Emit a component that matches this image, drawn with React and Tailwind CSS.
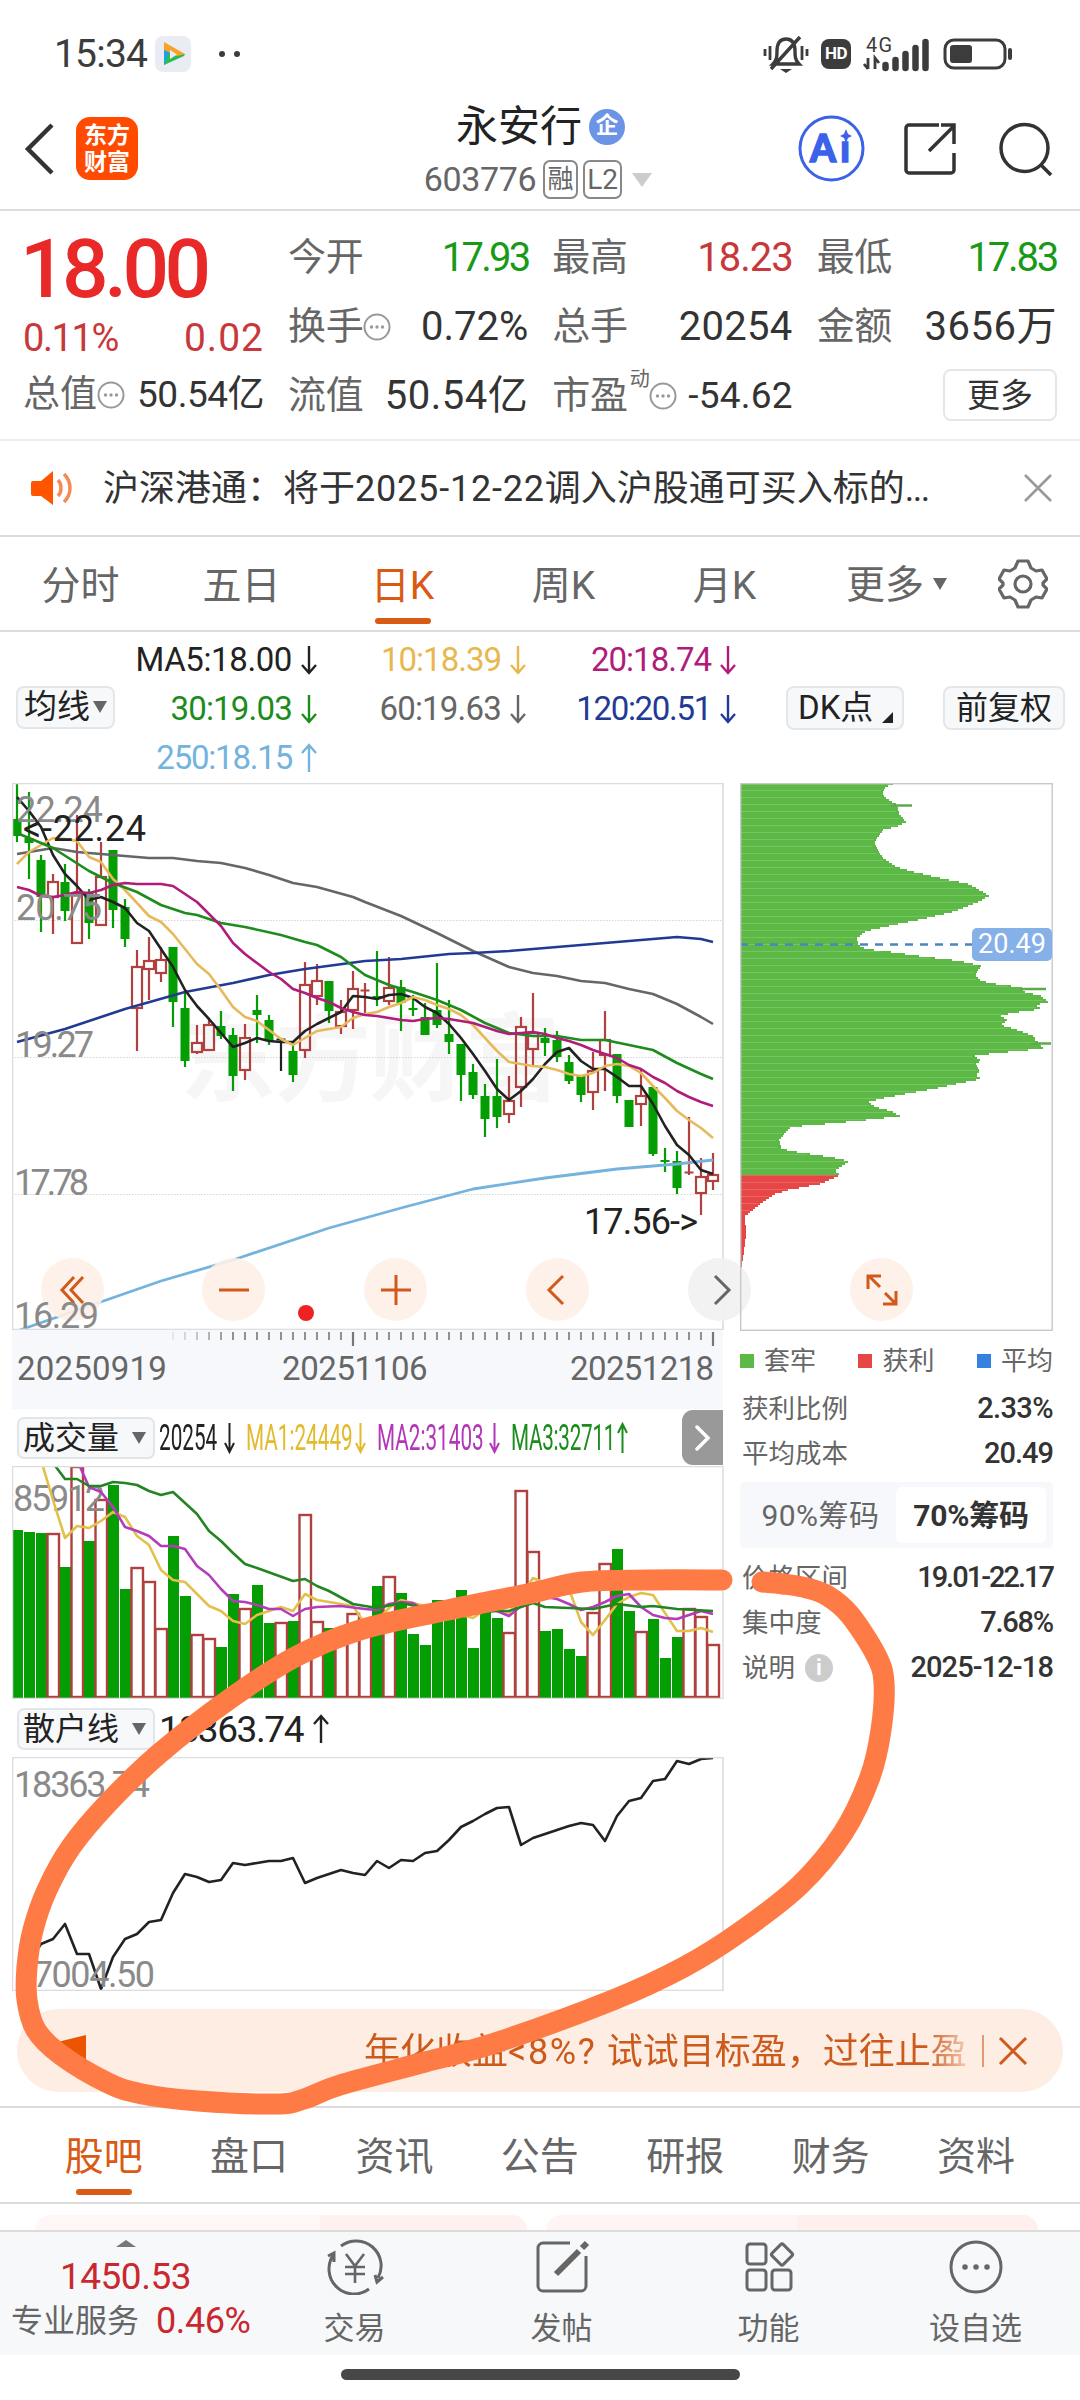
import { useState } from "react";
import clsx from "clsx";

const UP = "#b0413e";
const DOWN = "#049d04";

// [type, high, bodyTop, bodyBottom, low]   r = up, g = down, k = flat
const CANDLES = [
    ["g", 0, 36, 53, 59], ["g", 9, 55, 60, 96], ["g", 72, 77, 114, 149], ["r", 91, 98, 114, 151],
    ["g", 81, 99, 128, 138], ["r", 32, 109, 160, 160], ["g", 106, 109, 140, 156], ["r", 59, 93, 142, 142],
    ["g", 67, 67, 127, 145], ["g", 116, 124, 156, 164], ["r", 167, 183, 225, 268], ["r", 154, 177, 186, 217],
    ["r", 164, 176, 190, 199], ["g", 164, 164, 219, 244], ["g", 209, 225, 278, 284], ["r", 242, 259, 269, 271],
    ["r", 235, 241, 267, 267], ["g", 228, 243, 253, 256], ["g", 245, 252, 293, 308], ["r", 241, 254, 287, 297],
    ["g", 212, 227, 232, 260], ["g", 232, 237, 257, 262], ["k", 256, 256, 257, 288], ["g", 260, 268, 292, 299],
    ["r", 179, 201, 267, 275], ["r", 181, 197, 213, 222], ["g", 198, 198, 228, 240], ["r", 217, 228, 243, 251],
    ["r", 188, 205, 227, 246], ["r", 200, 207, 208, 230], ["g", 168, 213, 215, 223], ["r", 174, 204, 218, 222],
    ["g", 197, 204, 220, 248], ["g", 212, 225, 227, 233], ["g", 220, 234, 252, 252], ["g", 180, 227, 242, 245],
    ["g", 217, 251, 259, 271], ["g", 261, 261, 292, 318], ["g", 281, 289, 312, 316], ["g", 301, 313, 336, 354],
    ["g", 276, 313, 334, 345], ["r", 293, 317, 331, 340], ["r", 234, 243, 304, 324], ["r", 210, 249, 266, 283],
    ["g", 245, 255, 260, 273], ["g", 248, 257, 274, 279], ["g", 272, 279, 298, 301], ["g", 292, 292, 312, 319],
    ["r", 269, 287, 309, 327], ["r", 228, 256, 272, 308], ["g", 271, 271, 313, 320], ["g", 317, 317, 344, 344],
    ["r", 286, 312, 321, 343], ["g", 304, 304, 371, 373], ["g", 365, 377, 379, 389], ["g", 368, 378, 405, 411],
    ["r", 334, 389, 390, 392], ["r", 375, 393, 410, 432], ["r", 370, 391, 398, 407],
];

const MA5 = [14, 28, 44, 72, 91, 103, 117, 114, 119, 125, 140, 148, 166, 184, 207, 223, 236, 250, 264, 260, 255, 258, 259, 259, 248, 241, 235, 229, 213, 214, 216, 212, 211, 215, 224, 230, 241, 255, 271, 288, 306, 317, 308, 296, 281, 269, 265, 278, 286, 286, 294, 303, 303, 321, 343, 362, 372, 387, 391];
const MA10 = [81, 69, 62, 55, 56, 58, 74, 79, 96, 107, 120, 133, 139, 151, 166, 181, 191, 207, 224, 234, 238, 247, 256, 262, 255, 248, 246, 244, 235, 231, 229, 224, 220, 214, 217, 222, 226, 232, 242, 255, 268, 279, 281, 283, 284, 287, 291, 293, 290, 283, 281, 283, 290, 303, 315, 328, 337, 345, 355];
const MA20 = [104, 107, 113, 114, 112, 109, 110, 107, 102, 100, 101, 101, 101, 103, 111, 119, 131, 143, 160, 171, 180, 189, 196, 206, 210, 215, 219, 225, 229, 232, 233, 235, 237, 238, 236, 235, 236, 238, 240, 244, 248, 251, 250, 249, 251, 255, 258, 262, 267, 271, 275, 282, 286, 294, 300, 308, 314, 319, 323];
// the slower averages are stored sparsely as [index, y]
const MA30 = [[0, 50], [1, 55], [3, 65], [6, 88], [8, 100], [10, 109], [12, 122], [14, 130], [15, 132], [17, 140], [18, 142], [19, 144], [22, 152], [24, 159], [25, 162], [27, 174], [29, 192], [30, 197], [31, 202], [33, 209], [35, 217], [37, 227], [39, 240], [41, 250], [43, 253], [45, 253], [47, 257], [49, 257], [51, 262], [53, 267], [55, 280], [57, 291], [58, 296]];
const MA60 = [[0, 71], [3, 65], [5, 69], [8, 72], [11, 75], [13, 75], [15, 78], [17, 80], [19, 85], [21, 92], [23, 100], [25, 104], [28, 114], [29, 119], [32, 133], [35, 150], [38, 168], [41, 184], [43, 190], [45, 193], [47, 198], [49, 200], [51, 206], [53, 211], [55, 221], [57, 234], [58, 241]];
const MA120 = [[0, 259], [4, 246], [9, 226], [14, 209], [18, 200], [21, 192], [24, 186], [29, 178], [32, 176], [36, 171], [38, 170], [41, 168], [45, 164], [50, 159], [54, 155], [55, 154], [57, 156], [58, 159]];
const MA250 = [[0, 548], [12, 498], [18, 477], [26, 445], [32, 425], [38, 406], [44, 395], [50, 386], [55, 381], [58, 377]];

const VOLUME = [64, 66, 67, 67, 101, 0, 75, 33, 19, 123, 101, 115, 162, 70, 130, 168, 172, 181, 128, 142, 119, 157, 156, 155, 48, 155, 162, 165, 147, 168, 120, 110, 127, 168, 179, 134, 150, 124, 182, 144, 152, 166, 24, 85, 165, 163, 183, 190, 146, 97, 83, 145, 165, 153, 192, 171, 142, 150, 178];
const VMA1 = [[2, -6], [3, 34], [4, 72], [5, 60], [6, 62], [7, 55], [8, 46], [9, 51], [10, 70], [11, 79], [12, 104], [13, 114], [14, 116], [15, 128], [16, 140], [17, 145], [18, 155], [19, 158], [20, 149], [21, 145], [22, 141], [23, 145], [24, 128], [25, 134], [26, 136], [27, 138], [28, 140], [29, 158], [30, 155], [31, 142], [32, 134], [33, 137], [34, 140], [35, 142], [36, 144], [37, 149], [38, 152], [39, 144], [40, 142], [41, 147], [42, 131], [43, 112], [44, 117], [45, 116], [46, 123], [47, 156], [48, 169], [49, 154], [50, 138], [51, 131], [52, 127], [53, 129], [54, 147], [55, 165], [56, 165], [57, 162], [58, 166]];
const VMA2 = [[5, -6], [6, 21], [7, 26], [8, 41], [9, 61], [10, 65], [11, 70], [12, 80], [13, 80], [14, 83], [15, 100], [16, 109], [17, 123], [18, 135], [19, 136], [20, 139], [21, 143], [22, 143], [23, 150], [24, 143], [25, 141], [27, 140], [29, 143], [30, 144], [31, 138], [32, 136], [33, 137], [34, 144], [39, 142], [40, 145], [41, 150], [42, 140], [43, 131], [44, 131], [45, 133], [46, 138], [47, 144], [48, 141], [49, 136], [50, 130], [51, 128], [52, 141], [53, 149], [54, 152], [55, 153], [56, 149], [57, 145], [58, 148]];
const VMA3 = [[3, -3], [4, 13], [5, 13], [6, 20], [7, 20], [8, 16], [9, 17], [10, 19], [11, 25], [12, 29], [13, 26], [15, 48], [16, 65], [17, 75], [18, 87], [19, 98], [20, 102], [23, 115], [24, 113], [25, 120], [26, 125], [28, 138], [29, 140], [30, 142], [32, 137], [34, 142], [38, 147], [40, 145], [41, 145], [42, 141], [43, 137], [44, 141], [46, 142], [48, 143], [50, 138], [52, 141], [53, 140], [55, 143], [58, 145]];

const RETAIL = [232, 205, 187, 182, 167, 197, 197, 232, 200, 182, 177, 165, 163, 136, 117, 120, 125, 123, 106, 108, 106, 104, 104, 101, 126, 121, 117, 113, 116, 118, 104, 111, 103, 104, 96, 94, 83, 70, 64, 57, 51, 50, 88, 81, 77, 73, 69, 66, 68, 84, 59, 44, 41, 24, 22, 4, 7, 2, 1];

// outline of the cost distribution: [width, y]
const CHIPS = [
    [155, 0], [146, 4], [142, 10], [144, 14], [150, 18], [156, 21], [158, 25], [159, 31], [166, 39], [158, 43], [143, 47], [138, 54], [134, 60], [137, 66],
    [143, 75], [156, 84], [170, 88], [195, 94], [228, 101], [236, 105], [249, 113], [238, 119], [216, 128], [183, 136], [153, 142], [126, 148], [117, 155],
    [118, 162], [126, 166], [151, 169], [186, 174], [220, 178], [241, 183], [235, 192], [241, 198], [261, 202], [281, 204], [285, 209], [301, 213],
    [308, 219], [296, 222], [301, 226], [271, 230], [261, 233], [267, 237], [261, 242], [280, 248], [296, 254], [293, 256], [298, 259], [303, 265],
    [280, 268], [256, 270], [235, 273], [241, 278], [236, 281], [240, 288], [236, 292], [241, 296], [221, 300], [198, 305], [160, 312], [139, 316],
    [129, 319], [135, 324], [151, 328], [160, 333], [136, 336], [96, 340], [51, 344], [46, 349], [39, 357], [41, 365], [50, 368], [90, 374], [109, 378],
    [95, 388], [99, 391], [98, 393], [80, 401], [48, 407], [35, 411], [20, 421], [5, 433], [6, 451], [3, 475], [0, 492],
];

const MARK = [
    [722, 1580], [650, 1580], [582, 1582], [527, 1594], [443, 1611], [360, 1630], [295, 1657], [231, 1698], [160, 1753], [108, 1803], [71, 1847],
    [47, 1890], [33, 1930], [27, 1967], [27, 2000], [36, 2030], [61, 2055], [108, 2083], [142, 2094], [198, 2101], [276, 2104], [304, 2099], [340, 2085],
    [425, 2062], [495, 2043], [613, 2000], [684, 1967], [740, 1932], [800, 1885], [843, 1833], [870, 1777], [881, 1730], [884, 1683], [876, 1655],
    [850, 1615], [828, 1596], [807, 1588], [783, 1584], [762, 1582],
];

const px = (i) => 5 + 12 * i;
const line = (data) => data.map((d, i) => (Array.isArray(d) ? `${px(d[0])},${d[1]}` : `${px(i)},${d}`)).join(" ");

const chipWidth = (y) => {
    const k = CHIPS.findIndex((p) => p[1] >= y);
    if (k === 0) return CHIPS[0][0];
    if (k < 0) return 0;
    const [w0, y0] = CHIPS[k - 1];
    const [w1, y1] = CHIPS[k];
    return w0 + ((w1 - w0) * (y - y0)) / (y1 - y0);
};

// Catmull-Rom through the given points
const smooth = (pts) => {
    let d = `M${pts[0][0]} ${pts[0][1]}`;
    for (let i = 0; i < pts.length - 1; i++) {
        const a = pts[i - 1] || pts[i];
        const b = pts[i];
        const c = pts[i + 1];
        const e = pts[i + 2] || c;
        d += ` C${b[0] + (c[0] - a[0]) / 6} ${b[1] + (c[1] - a[1]) / 6} ${c[0] - (e[0] - b[0]) / 6} ${c[1] - (e[1] - b[1]) / 6} ${c[0]} ${c[1]}`;
    }
    return d;
};

function Line({ data, color, width = 2.6 }) {
    return <polyline points={line(data)} fill="none" stroke={color} strokeWidth={width} strokeLinejoin="round" />;
}

function Label({ x, y, w, color = "#8a8a8a", children }) {
    return (
        <text x={x} y={y} textLength={w} fontSize="36" fill={color} className="font-['Roboto',sans-serif]">
            {children}
        </text>
    );
}

function Arrow({ up }) {
    return (
        <svg width="16" height="30" viewBox="0 0 16 30" fill="none" stroke="currentColor" strokeWidth="2.4" className={clsx("shrink-0", up && "rotate-180")}>
            <path d="M8 1v27M1 20l7 8 7-8" />
        </svg>
    );
}

function Dots() {
    return (
        <svg width="28" height="28" viewBox="0 0 28 28" className="shrink-0">
            <circle cx="14" cy="14" r="12.5" fill="none" stroke="#999" strokeWidth="2" />
            <circle cx="8.5" cy="14" r="1.7" fill="#999" />
            <circle cx="14" cy="14" r="1.7" fill="#999" />
            <circle cx="19.5" cy="14" r="1.7" fill="#999" />
        </svg>
    );
}

function StatusBar() {
    return (
        <div className="h-[108px] pl-[54px] pr-[67px] flex items-center justify-between text-[#3c3c3c]">
            <div className="flex items-center">
                <span className="text-[39px] tracking-[-0.8px] w-[101px]">15:34</span>
                <svg width="36" height="36" viewBox="0 0 36 36">
                    <rect width="36" height="36" rx="8" fill="#e9edf3" />
                    <path d="M9 7v22l8-5V13z" fill="#1f9bf0" />
                    <path d="M9 29l4-11h17l-1 2z" fill="#2dbb55" />
                    <path d="M9 6l21 12-8 2L9 14z" fill="#f7a325" />
                    <path d="M15 14v9l7-4.500z" fill="#e9edf3" />
                </svg>
                <span className="ml-[28px] w-[6px] h-[6px] rounded-full bg-[#3c3c3c]" />
                <span className="ml-[9px] w-[6px] h-[6px] rounded-full bg-[#3c3c3c]" />
            </div>
            <div className="flex items-center">
                <svg width="46" height="40" viewBox="0 0 46 40" fill="none" stroke="#3c3c3c" strokeWidth="3.400">
                    <path d="M10 30c4-4 4-8 4-13 0-8 3-12 9-12s9 4 9 12c0 5 0 9 4 13zM37 3L8 35" />
                    <path d="M17 35h12l-6 4z" fill="#3c3c3c" stroke="none" />
                    <path d="M7 12v14M2 15v7M39 12v14M44 15v7" strokeWidth="2.800" />
                </svg>
                <span className="ml-[12px] w-[30px] h-[30px] rounded-[8px] bg-[#3c3c3c] text-white text-[17px] font-bold flex items-center justify-center tracking-[-0.5px]">HD</span>
                <svg width="68" height="36" viewBox="0 0 68 36" className="ml-[11px]">
                    <text x="4" y="16" fontSize="20" textLength="26" fill="#3c3c3c" className="font-['Roboto',sans-serif]">4G</text>
                    <path d="M6 22v11M2 28l4 5M13 33V22l4 5" stroke="#3c3c3c" strokeWidth="2.800" fill="none" />
                    <path d="M23.500 32v-3M33.500 32v-8M43.500 32v-14M53.500 32v-20M63.500 32v-26" stroke="#3c3c3c" strokeWidth="6.500" strokeLinecap="round" />
                </svg>
                <svg width="70" height="32" viewBox="0 0 70 32" className="ml-[13px]">
                    <rect x="2" y="2" width="60" height="28" rx="9" fill="none" stroke="#3c3c3c" strokeWidth="3" />
                    <rect x="7" y="7" width="22" height="18" rx="3" fill="#3c3c3c" />
                    <path d="M67 12v8" stroke="#3c3c3c" strokeWidth="4" strokeLinecap="round" />
                </svg>
            </div>
        </div>
    );
}

function Header() {
    return (
        <div className="h-[103px] border-b-2 border-[#dcdcdc] flex items-start justify-between pl-[24px] pr-[27px]">
            <div className="flex items-center w-[330px] pt-[9px]">
                <svg width="30" height="52" viewBox="0 0 30 52" fill="none" stroke="#333" strokeWidth="4.500">
                    <path d="M28 2L4 26l24 24" />
                </svg>
                <div className="ml-[22px] w-[62px] h-[63px] rounded-[14px] bg-[#ff4a00] text-white font-bold text-[23px] leading-[27px] flex flex-col items-center justify-center">
                    <span>东方</span>
                    <span>财富</span>
                </div>
            </div>
            <div className="flex flex-col items-center">
                <div className="h-[37px] flex items-center text-[42px] text-[#222] ml-[4px]">
                    <span>永安行</span>
                    <span className="ml-[7px] w-[36px] h-[36px] rounded-full bg-[#6b93e6] text-white text-[23px] font-bold flex items-center justify-center">企</span>
                </div>
                <div className="mt-[15px] -ml-[1px] h-[39px] flex items-center text-[#666]">
                    <span className="text-[34px] tracking-[-0.4px]">603776</span>
                    <span className="ml-[7px] w-[35px] h-[39px] border-2 border-[#888] rounded-[7px] text-[26px] flex items-center justify-center">融</span>
                    <span className="ml-[5px] w-[39px] h-[39px] border-2 border-[#888] rounded-[7px] text-[28px] flex items-center justify-center">L2</span>
                    <svg width="20" height="14" viewBox="0 0 20 14" className="ml-[10px]">
                        <path d="M0 0h20L10 14z" fill="#ccc" />
                    </svg>
                </div>
            </div>
            <div className="flex items-center justify-end w-[330px] pt-[7px]">
                <svg width="67" height="67" viewBox="0 0 67 67">
                    <circle cx="33.500" cy="33.500" r="31.500" fill="none" stroke="#3b62e8" strokeWidth="3" />
                    <text x="12" y="47" fontSize="37" fontWeight="900" fill="#3b62e8" stroke="#3b62e8" strokeWidth="1.500" textLength="40" className="font-['Lato','Inter',sans-serif]">Aı</text>
                    <path d="M48 14l2 5 4 2-4 2-2 5-2-5-4-2 4-2z" fill="#3b62e8" />
                </svg>
                <svg width="54" height="54" viewBox="0 0 54 54" fill="none" stroke="#333" strokeWidth="3.500" className="ml-[38px]">
                    <path d="M36 3H6a3 3 0 0 0-3 3v42a3 3 0 0 0 3 3h42a3 3 0 0 0 3-3V31" />
                    <path d="M26 29L51 4M38 3h13v19" />
                </svg>
                <svg width="54" height="54" viewBox="0 0 54 54" fill="none" stroke="#333" strokeWidth="3.500" className="ml-[42px]">
                    <circle cx="25.500" cy="26" r="23.500" />
                    <path d="M42 43l10 10" />
                </svg>
            </div>
        </div>
    );
}

function Cell({ label, value, tone = "text-[#333]", dots, sup, small }) {
    return (
        <div className="flex items-center justify-between h-[69px]">
            <span className="flex items-center text-[38px] tracking-[-0.3px] text-[#666]">
                {label}
                {sup && <span className="text-[20px] -mt-[34px] ml-[2px]">{sup}</span>}
                {dots && <Dots />}
            </span>
            <span className={clsx("whitespace-nowrap", small ? "text-[37px] tracking-[0.2px]" : "text-[40px]", tone)}>{value}</span>
        </div>
    );
}

function Quote() {
    return (
        <div className="h-[230px] border-b-2 border-[#ececec] pl-[23px] pr-[23px] flex gap-[24px]">
            <div className="w-[241px] pt-[13px]">
                <div className="h-[90px] -ml-[3px] flex items-center text-[82px] font-medium tracking-[-4.500px] text-[#e92828] leading-none">18.00</div>
                <div className="h-[48px] flex items-center justify-between text-[38px] text-[#c8383a]">
                    <span className="tracking-[-1.400px]">0.11%</span>
                    <span className="tracking-[1px] text-[39px]">0.02</span>
                </div>
                <div className="h-[66px] flex items-center justify-between">
                    <span className="flex items-center text-[37px] text-[#666]">总值<Dots /></span>
                    <span className="text-[37px] tracking-[-0.500px] text-[#333]">50.54亿</span>
                </div>
            </div>
            <div className="flex-1 grid grid-cols-3 gap-x-[24px] content-start pt-[12px]">
                <Cell label="今开" value="17.93" tone="text-[#189a18] tracking-[-2.800px]" />
                <Cell label="最高" value="18.23" tone="text-[#c8383a] tracking-[-1px]" />
                <Cell label="最低" value="17.83" tone="text-[#189a18] tracking-[-2.200px]" />
                <Cell label="换手" dots value="0.72%" />
                <Cell label="总手" value="20254" tone="text-[#333] tracking-[0.300px]" />
                <Cell label="金额" value="3656万" tone="text-[#333] tracking-[0.500px]" />
                <Cell label="流值" value="50.54亿" tone="text-[#333] tracking-[0.500px]" />
                <Cell label="市盈" sup="动" dots small value="-54.62" />
                <div className="h-[69px] flex items-center justify-end">
                    <button className="w-[114px] h-[52px] -mt-[2px] border-2 border-[#e6e6e6] rounded-[8px] text-[33px] text-[#333]">更多</button>
                </div>
            </div>
        </div>
    );
}

function Notice() {
    return (
        <div className="h-[96px] border-b-2 border-[#dcdcdc] flex items-center pl-[31px] pr-[28px]">
            <svg width="42" height="36" viewBox="0 0 42 36">
                <path d="M2 11h8L22 1v34L10 26H2a2 2 0 0 1-2-2V13a2 2 0 0 1 2-2z" fill="#ff5500" />
                <path d="M27 10c4 4 4 12 0 16M33 4c8 8 8 20 0 28" fill="none" stroke="#f58a55" strokeWidth="3.500" />
            </svg>
            <p className="ml-[30px] pt-[2px] flex-1 text-[36px] text-[#333] whitespace-nowrap">沪深港通：将于<span className="tracking-[0.800px]">2025-12-22</span>调入沪股通可买入标的<span className="tracking-[-1.500px]">...</span></p>
            <svg width="28" height="28" viewBox="0 0 28 28" stroke="#999" strokeWidth="2.600">
                <path d="M1 1l26 26M27 1L1 27" />
            </svg>
        </div>
    );
}

const PERIODS = ["分时", "五日", "日K", "周K", "月K"];

function PeriodTabs() {
    const [active, setActive] = useState("日K");
    return (
        <div className="h-[95px] border-b-2 border-[#dcdcdc] flex text-[39px] text-[#666]">
            {PERIODS.map((p) => (
                <button key={p} onClick={() => setActive(p)} className={clsx("w-[161px] flex flex-col items-center", active === p && "text-[#d95a14]")}>
                    <span className="h-[81px] pt-[18px] leading-[62px]">{p}</span>
                    {active === p && <span className="w-[56px] h-[6px] rounded-full bg-[#d95a14]" />}
                </button>
            ))}
            <button className="ml-[41px] h-[97px] flex items-center">
                更多
                <svg width="14" height="12" viewBox="0 0 14 12" className="ml-[9px] -mt-[4px]">
                    <path d="M0 0h14L7 12z" fill="#666" />
                </svg>
            </button>
            <svg width="50" height="50" viewBox="0 0 50 50" fill="none" stroke="#666" strokeWidth="3.200" strokeLinejoin="round" className="ml-[51px] mt-[22px]">
                <path d="M20 2h10l3 7 5 3 6-1 5 9-4 4v2l4 4-5 9-6-1-5 3-3 7H20l-3-7-5-3-6 1-5-9 4-4v-2l-4-4 5-9 6 1 5-3z" />
                <circle cx="25" cy="25" r="8" />
            </svg>
        </div>
    );
}

function Avg({ text, up, tone }) {
    return (
        <div className={clsx("h-[49px] flex items-center justify-end gap-[9px] text-[33px]", tone)}>
            <span>{text}</span>
            <Arrow up={up} />
        </div>
    );
}

function Averages() {
    return (
        <div className="h-[151px] flex items-center text-[33px] text-[#222]">
            <button className="ml-[16px] -mt-[1px] w-[99px] h-[43px] border-2 border-[#e4e7ea] bg-[#f6f8fa] rounded-[8px] flex items-center justify-center">
                均线
                <svg width="14" height="12" viewBox="0 0 14 12" className="ml-[3px]">
                    <path d="M0 0h14L7 12z" fill="#666" />
                </svg>
            </button>
            <div className="w-[621px] grid grid-cols-[202px_209px_210px] mt-[2px]">
                <Avg text="MA5:18.00" tone="text-[#222] tracking-[-0.400px]" />
                <Avg text="10:18.39" tone="text-[#e8b84e] tracking-[-1px]" />
                <Avg text="20:18.74" tone="text-[#b01c7a] tracking-[-1px]" />
                <Avg text="30:19.03" tone="text-[#1c8c1c] tracking-[-0.800px]" />
                <Avg text="60:19.63" tone="text-[#666] tracking-[-0.800px]" />
                <Avg text="120:20.51" tone="text-[#233a94] tracking-[-1.300px]" />
                <Avg text="250:18.15" up tone="text-[#74b3dd] tracking-[-1.200px]" />
            </div>
            <button className="ml-[50px] w-[118px] h-[44px] border-2 border-[#e4e7ea] bg-[#f6f8fa] rounded-[8px] flex items-center pl-[10px]">
                DK点
                <svg width="11" height="11" viewBox="0 0 11 11" className="ml-[9px] mt-[20px]">
                    <path d="M11 0v11H0z" fill="#222" />
                </svg>
            </button>
            <button className="ml-[39px] w-[122px] h-[44px] border-2 border-[#e4e7ea] bg-[#f6f8fa] rounded-[8px] text-[32px] flex items-center justify-center">前复权</button>
        </div>
    );
}

function Round({ children, className, gray }) {
    return (
        <button className={clsx("absolute w-[63px] h-[63px] rounded-full flex items-center justify-center", gray ? "bg-[#f1f1f1]/90 text-[#666]" : "bg-[#fef0e8]/90 text-[#cf5a1c]", className)}>
            <svg width="34" height="34" viewBox="0 0 34 34" fill="none" stroke="currentColor" strokeWidth="3">
                {children}
            </svg>
        </button>
    );
}

function KLine() {
    return (
        <div className="relative h-[547px]">
            <svg width="712" height="547" viewBox="0 0 712 547" className="block">
                <text x="168" y="310" fontSize="96" textLength="380" fontWeight="700" fill="#f6f6f7" className="font-['Noto_Sans_CJK_SC',sans-serif]">东方财富</text>
                {[137, 274, 411].map((y) => (
                    <path key={y} d={`M0 ${y + 0.5}H711`} stroke="#d4d4d4" strokeDasharray="1.5 1.5" />
                ))}
                {CANDLES.map(([t, h, a, b, l], i) => {
                    const x = px(i);
                    if (t === "k" || b - a < 2) {
                        const c = t === "k" ? "#222" : UP;
                        return <path key={i} d={`M${x} ${h}V${l}M${x - 4.5} ${a + 0.5}h9`} stroke={c} strokeWidth="2.200" />;
                    }
                    if (t === "g") {
                        return (
                            <g key={i} fill={DOWN}>
                                <rect x={x - 1.1} y={h} width="2.200" height={l - h} />
                                <rect x={x - 4.5} y={a} width="9" height={b - a} />
                            </g>
                        );
                    }
                    return (
                        <g key={i} stroke={UP} strokeWidth="2.200" fill="none">
                            <path d={`M${x} ${h}V${a}M${x} ${b}V${l}`} />
                            <rect x={x - 5} y={a + 1} width="10" height={b - a - 1} />
                        </g>
                    );
                })}
                <Line data={MA60} color="#666" />
                <Line data={MA120} color="#233a94" />
                <Line data={MA250} color="#74b3dd" width={2.8} />
                <Line data={MA5} color="#222" />
                <Line data={MA10} color="#e8b95c" />
                <Line data={MA30} color="#1c8c1c" />
                <Line data={MA20} color="#b01c7a" />
                <rect x="0.500" y="0.500" width="710.500" height="546" fill="none" stroke="#ddd" strokeWidth="1.600" />
            </svg>
            <Round className="left-[29px] top-[475px]"><path d="M18 4L6 17l12 13M27 4L15 17l12 13" /></Round>
            <Round className="left-[190px] top-[475px]"><path d="M2 17h30" /></Round>
            <Round className="left-[352px] top-[475px]"><path d="M2 17h30M17 2v30" /></Round>
            <Round className="left-[514px] top-[475px]"><path d="M22 3L8 17l14 14" /></Round>
            <Round gray className="left-[676px] top-[475px]"><path d="M12 3l14 14-14 14" /></Round>
            <span className="absolute left-[286px] top-[522px] w-[16px] h-[16px] rounded-full bg-[#ee2222]" />
            <svg width="712" height="547" viewBox="0 0 712 547" className="absolute left-0 top-0 pointer-events-none">
                <Label x={4} y={39} w={87}>22.24</Label>
                <Label x={4} y={137} w={86}>20.75</Label>
                <Label x={3} y={274} w={79}>19.27</Label>
                <Label x={2} y={411.500} w={75}>17.78</Label>
                <Label x={2} y={545} w={85}>16.29</Label>
                <Label x={11} y={58} w={123} color="#222">&lt;-22.24</Label>
                <Label x={572} y={450.500} w={114} color="#222">17.56-&gt;</Label>
            </svg>
        </div>
    );
}

function Axis() {
    const ticks = Array.from({ length: 46 }, (_, k) => k + 13);
    return (
        <div className="h-[79px] bg-[#f7f8fb]">
            <svg width="712" height="18" viewBox="0 0 712 18" className="block">
                {ticks.map((i) => (
                    <path key={i} d={`M${px(i)} 2v${i === 28 || i === 58 ? 14 : 8}`} stroke="#777" strokeWidth={i === 28 || i === 58 ? 2.2 : 1.6} opacity={Math.min(1, (i - 12) / 6)} />
                ))}
            </svg>
            <div className="flex pt-[1px] pl-[5px] text-[33px] leading-[40px] text-[#666]">
                <span className="w-[265px] tracking-[0.200px]">20250919</span>
                <span className="w-[288px] tracking-[-0.400px]">20251106</span>
                <span className="tracking-[-0.600px]">20251218</span>
            </div>
        </div>
    );
}

function Picker({ children }) {
    return (
        <button className="w-[138px] h-[42px] shrink-0 border-2 border-[#e2e6ea] bg-[#f6f8fa] rounded-[7px] flex items-center text-[32px] text-[#222] pl-[4px]">
            {children}
            <svg width="14" height="12" viewBox="0 0 14 12" className="ml-[13px]">
                <path d="M0 0h14L7 12z" fill="#666" />
            </svg>
        </button>
    );
}

function Narrow({ children, box, tone, up }) {
    return (
        <div className={clsx("flex items-center text-[37px]", tone)}>
            <span className={clsx("whitespace-nowrap", box)}>
                <span className="inline-block origin-left scale-x-[0.56]">{children}</span>
            </span>
            <svg width="11" height="32" viewBox="0 0 11 32" fill="none" stroke="currentColor" strokeWidth="2" className={clsx("shrink-0", up && "rotate-180")}>
                <path d="M5.500 1v29M1 21l4.500 9L10 21" />
            </svg>
        </div>
    );
}

function Volume() {
    return (
        <>
            <div className="h-[57px] flex items-center pl-[5px]">
                <Picker>成交量</Picker>
                <div className="ml-[4px] pt-[1px] flex-1 flex">
                    <Narrow box="w-[65px]" tone="text-[#222]">20254</Narrow>
                    <Narrow box="w-[109px]" tone="text-[#e3b92e] ml-[11px]">MA1:24449</Narrow>
                    <Narrow box="w-[112px]" tone="text-[#b236b8] ml-[11px]">MA2:31403</Narrow>
                    <Narrow box="w-[106px] tracking-[-0.500px]" up tone="text-[#1c8c1c] ml-[11px]">MA3:32711</Narrow>
                </div>
                <button className="w-[41px] h-[55px] rounded-l-[11px] bg-[#999] flex items-center justify-center">
                    <svg width="16" height="26" viewBox="0 0 16 26" fill="none" stroke="#fff" strokeWidth="3.500" strokeLinecap="round">
                        <path d="M2 2l11 11L2 24" />
                    </svg>
                </button>
            </div>
            <svg width="712" height="233" viewBox="0 0 712 233" className="block">
                {VOLUME.map((y, i) =>
                    CANDLES[i][0] === "g" ? (
                        <rect key={i} x={12 * i} y={y} width="11" height={232 - y} fill={DOWN} />
                    ) : (
                        <rect key={i} x={12 * i - 0.5} y={y + 1} width="11.500" height={230 - y} fill="#fff" stroke={UP} strokeWidth="2.400" />
                    )
                )}
                <Label x={1} y={45} w={92}>85912</Label>
                <Line data={VMA1} color="#e3c04a" />
                <Line data={VMA2} color="#b43cba" />
                <Line data={VMA3} color="#228522" />
                <rect x="0.500" y="0.500" width="710.500" height="232" fill="none" stroke="#ddd" strokeWidth="1.500" />
            </svg>
        </>
    );
}

function Retail() {
    return (
        <>
            <div className="h-[58px] flex items-center pl-[5px] pt-[2px]">
                <Picker>散户线</Picker>
                <span className="ml-[4px] pt-[1px] text-[37px] text-[#222] tracking-[-1.400px]">18363.74</span>
                <span className="ml-[10px] text-[#222] flex"><Arrow up /></span>
            </div>
            <svg width="712" height="234" viewBox="0 0 712 234" className="block">
                <Line data={RETAIL} color="#222" width={2.6} />
                <Label x={2} y={40} w={136}>18363.74</Label>
                <Label x={2} y={230} w={141}>17004.50</Label>
                <rect x="0.500" y="0.500" width="710.500" height="233" fill="none" stroke="#ddd" strokeWidth="1.600" />
            </svg>
        </>
    );
}

function ChipChart() {
    const rows = [];
    for (let y = 0; y < 490; y += 2) rows.push(y);
    return (
        <div className="relative h-[548px]">
            <svg width="313" height="548" viewBox="0 0 313 548" className="block">
                {rows.map((y) => (
                    <rect key={y} x="0" y={y} width={chipWidth(y + 1)} height="2" fill={y < 392 ? "#5cb945" : "#e64646"} shapeRendering="crispEdges" />
                ))}
                <path d="M150 22.500h22M280 206h26M290 260.500h21" stroke="#5fa84c" strokeWidth="2.300" />
                {Array.from({ length: 61 }, (_, k) => 7 + k * 7).map((y) => (
                    <path key={y} d={`M0 ${y + 0.5}h${Math.max(0, chipWidth(y) - 3)}`} stroke="#fff" strokeWidth="1" opacity="0.160" />
                ))}
                <path d="M0 161.500h232" stroke="#4a86c0" strokeWidth="2.400" strokeDasharray="8 7" />
                <rect x="0.700" y="0.700" width="311.500" height="546.600" fill="none" stroke="#c8c8c8" strokeWidth="1.400" />
            </svg>
            <span className="absolute right-[1px] top-[145px] w-[80px] h-[33px] rounded-[5px] bg-[#86b0e8] text-white text-[27px] flex items-center justify-center">20.49</span>
            <Round className="left-[110px] top-[475px]"><path d="M15 14L4 3M3 16V3h13M20 20l11 11M31 18v13H18" /></Round>
        </div>
    );
}

function Stat({ label, value, info, tone = "tracking-[-0.600px]" }) {
    return (
        <div className="h-[45px] flex items-center justify-between pl-[2px] text-[26.500px] text-[#666]">
            <span className="flex items-center">
                {label}
                {info && <span className="ml-[10px] w-[28px] h-[28px] rounded-full bg-[#ccc] text-white text-[22px] font-bold flex items-center justify-center">i</span>}
            </span>
            <span className={clsx("text-[29px] font-medium text-[#333]", tone)}>{value}</span>
        </div>
    );
}

function ChipPanel() {
    return (
        <div className="w-[313px]">
            <ChipChart />
            <div className="h-[55px] pt-[5px] flex items-center justify-between text-[26px] text-[#666]">
                <span className="flex items-center gap-[10px]"><i className="w-[14px] h-[14px] bg-[#5cb945]" />套牢</span>
                <span className="flex items-center gap-[10px]"><i className="w-[14px] h-[14px] bg-[#e64646]" />获利</span>
                <span className="flex items-center gap-[10px]"><i className="w-[14px] h-[14px] bg-[#3681e0]" />平均</span>
            </div>
            <Stat label="获利比例" value="2.33%" />
            <Stat label="平均成本" value="20.49" tone="tracking-[-1px]" />
            <div className="mt-[6px] mb-[7px] h-[66px] rounded-[5px] bg-[#f7f8fb] p-[5px] flex text-[30px]">
                <span className="w-[151px] flex items-center justify-center tracking-[0.500px] text-[#666]">90%筹码</span>
                <span className="w-[150px] rounded-[6px] bg-white flex items-center justify-center font-bold tracking-[-0.200px] text-[#333]">70%筹码</span>
            </div>
            <Stat label="价格区间" value="19.01-22.17" tone="tracking-[-2px]" />
            <Stat label="集中度" value="7.68%" tone="tracking-[-1.200px]" />
            <Stat label="说明" info value="2025-12-18" tone="tracking-[-0.900px]" />
        </div>
    );
}

function Banner() {
    return (
        <div className="mx-[17px] mt-[18px] h-[83px] rounded-full bg-[#fdede3] flex items-center text-[#cc5a1b]">
            <svg width="50" height="40" viewBox="0 0 50 40" className="ml-[20px]">
                <path d="M0 16L49 4v30L16 22z" fill="#ec5500" />
            </svg>
            <div className="ml-[277px] pt-[2px] w-[604px] text-[36px] whitespace-nowrap overflow-hidden [mask-image:linear-gradient(to_right,#000_93%,transparent_102%)]">年化收益<span className="tracking-[1.600px]">&lt;8%? </span>试试目标盈，过往止盈</div>
            <span className="ml-[14px] w-[2px] h-[32px] bg-[#dd9a75]" />
            <svg width="30" height="30" viewBox="0 0 30 30" stroke="#cf5a1c" strokeWidth="3" className="ml-[14px]">
                <path d="M2 2l26 26M28 2L2 28" />
            </svg>
        </div>
    );
}

const SECTIONS = ["股吧", "盘口", "资讯", "公告", "研报", "财务", "资料"];

function SectionTabs() {
    const [active, setActive] = useState("股吧");
    return (
        <div className="mt-[14px] h-[98px] border-y-2 border-[#dcdcdc] pl-[31px] flex text-[39px] text-[#666]">
            {SECTIONS.map((s) => (
                <button key={s} onClick={() => setActive(s)} className={clsx("w-[145.4px] flex flex-col items-center", active === s && "text-[#d95a14]")}>
                    <span className="h-[81px] pt-[18px] leading-[62px]">{s}</span>
                    {active === s && <span className="w-[56px] h-[6px] rounded-full bg-[#d95a14]" />}
                </button>
            ))}
        </div>
    );
}

function NavItem({ label, children }) {
    return (
        <button className="w-[207px] flex flex-col items-center pt-[7px] text-[31px] text-[#666]">
            <svg width="60" height="56" viewBox="0 0 60 56" fill="none" stroke="#666" strokeWidth="3">
                {children}
            </svg>
            <span className="leading-[40px] mt-[14px]">{label}</span>
        </button>
    );
}

function BottomNav() {
    return (
        <div className="h-[125px] border-t-2 border-[#dcdcdc] bg-[#f7f8fa] flex">
            <div className="w-[251px] flex flex-col items-center pt-[8px]">
                <svg width="20" height="7" viewBox="0 0 20 7">
                    <path d="M10 0l10 7H0z" fill="#777" />
                </svg>
                <span className="text-[37px] leading-[44px] mt-[8px] tracking-[-0.500px] text-[#c8282e]">1450.53</span>
                <span className="text-[32px] leading-[44px] text-[#666] whitespace-nowrap pl-[11px] w-full flex items-center">
                    专业服务<span className="ml-[17px] text-[36px] tracking-[-0.400px] text-[#c8282e]">0.46%</span>
                </span>
            </div>
            <NavItem label="交易">
                <path d="M16 7a25 25 0 0 1 37 32M44 50A25 25 0 0 1 9 15M3 17l6-3v9M50 36l2 7 6-5" />
                <path d="M21 15l9 12 9-12M20 28h20M20 35h20M30 27v17" strokeWidth="2.600" />
            </NavItem>
            <NavItem label="发帖">
                <path d="M38 4H11a5 5 0 0 0-5 5v38a5 5 0 0 0 5 5h38a5 5 0 0 0 5-5V17" />
                <path d="M24 35L47 12M50 9l5-5" strokeWidth="6" />
            </NavItem>
            <NavItem label="功能">
                <rect x="8" y="5" width="19" height="20" rx="3" />
                <rect x="8" y="31" width="19" height="20" rx="3" />
                <rect x="33" y="31" width="19" height="20" rx="3" />
                <rect x="35" y="7.500" width="16" height="16" rx="2" transform="rotate(45 43 15.500)" />
            </NavItem>
            <NavItem label="设自选">
                <circle cx="30" cy="28" r="25" />
                <path d="M19 28h.01M30 28h.01M41 28h.01" strokeWidth="5.500" strokeLinecap="round" />
            </NavItem>
        </div>
    );
}

export default function App() {
    return (
        <div className="relative w-[1080px] h-[2400px] overflow-hidden bg-white font-['Roboto','Noto_Sans_CJK_SC',sans-serif]">
            <StatusBar />
            <Header />
            <Quote />
            <Notice />
            <PeriodTabs />
            <Averages />
            <div className="h-[1208px] pl-[12px] flex gap-[17px]">
                <div className="w-[711px]">
                    <KLine />
                    <Axis />
                    <Volume />
                    <Retail />
                </div>
                <ChipPanel />
            </div>
            <Banner />
            <SectionTabs />
            <div className="h-[26px] pt-[11px] pl-[35px] flex gap-[19px]">
                <div className="w-[492px] h-[15px] rounded-t-[16px] bg-[linear-gradient(to_right,#fff7f5_58%,#fff1ef_58%)]" />
                <div className="w-[492px] h-[15px] rounded-t-[16px] bg-[linear-gradient(to_right,#fff5f4_51%,#ffefed_51%)]" />
            </div>
            <BottomNav />
            <div className="mt-[14px] mx-auto w-[399px] h-[11px] rounded-full bg-[#474747]" />
            <svg width="1080" height="2400" viewBox="0 0 1080 2400" className="absolute inset-0 pointer-events-none">
                <path d={smooth(MARK)} fill="none" stroke="#ff7b45" strokeWidth="21" strokeLinecap="round" />
            </svg>
        </div>
    );
}
